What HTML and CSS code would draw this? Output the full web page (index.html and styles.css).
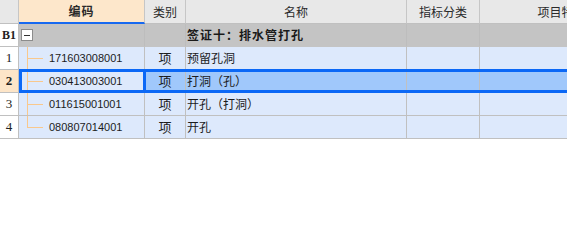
FILE: index.html
```html
<!DOCTYPE html>
<html lang="zh-CN">
<head>
<meta charset="utf-8">
<title>签证十</title>
<link rel="stylesheet" href="styles.css">
</head>
<body>
<div class="sheet">
  <div class="grid">
    <div class="c hd rh"></div>
    <div class="c hd hd-active">编码</div>
    <div class="c hd">类别</div>
    <div class="c hd">名称</div>
    <div class="c hd">指标分类</div>
    <div class="c hd">项目特征</div>

    <div class="c rh rh-b">B1</div>
    <div class="c grp code"><span class="expander"></span></div>
    <div class="c grp"></div>
    <div class="c grp name grp-title">签证十：排水管打孔</div>
    <div class="c grp"></div>
    <div class="c grp"></div>

    <div class="c rh">1</div>
    <div class="c row code tree">171603008001</div>
    <div class="c row mid">项</div>
    <div class="c row name">预留孔洞</div>
    <div class="c row"></div>
    <div class="c row"></div>

    <div class="c rh rh-sel">2</div>
    <div class="c row code tree">030413003001</div>
    <div class="c row sel mid">项</div>
    <div class="c row sel name">打洞（孔）</div>
    <div class="c row sel"></div>
    <div class="c row sel"></div>

    <div class="c rh">3</div>
    <div class="c row code tree">011615001001</div>
    <div class="c row mid">项</div>
    <div class="c row name">开孔（打洞）</div>
    <div class="c row"></div>
    <div class="c row"></div>

    <div class="c rh">4</div>
    <div class="c row code tree tree-last">080807014001</div>
    <div class="c row mid">项</div>
    <div class="c row name">开孔</div>
    <div class="c row"></div>
    <div class="c row"></div>
  </div>
  <div class="sel-row"></div>
  <div class="sel-cell"></div>
</div>
</body>
</html>
```
FILE: styles.css
```css
html, body {
  margin: 0;
  padding: 0;
  background: #ffffff;
  overflow: hidden;
}
body {
  width: 567px;
  height: 242px;
  font-family: "Noto Sans CJK SC", "Liberation Sans", sans-serif;
  font-size: 12px;
  color: #1c1c1c;
}
.sheet {
  position: relative;
  width: 644px;
}
.grid {
  display: grid;
  grid-template-columns: 19px 126px 41px 221px 73px 164px;
  grid-template-rows: 24px 23px 23px 23px 23px 23px;
}
.c {
  box-sizing: border-box;
  border-right: 1px solid #c0c0c0;
  border-bottom: 1px solid #c0c0c0;
  line-height: 22px;
  white-space: nowrap;
  overflow: hidden;
}
.hd {
  background: #e8e8e8;
  text-align: center;
  color: #2a2a2a;
  line-height: 23px;
  border-right-color: #c6c6c6;
}
.hd-active {
  background: #fde7cb;
  font-weight: bold;
  border-bottom: 2px solid #1769f0;
  line-height: 22px;
  letter-spacing: 1px;
}
.rh {
  background: #ffffff;
  text-align: center;
  font-family: "Liberation Serif", serif;
  font-size: 13px;
  color: #222;
}
.hd.rh { background: #e8e8e8; }
.rh-b {
  font-weight: bold;
  font-size: 12px;
}
.rh-sel {
  background: #fde5c8;
  font-weight: bold;
}
.grp {
  background: #c4c4c4;
  border-right-color: #bdbdbd;
  border-bottom-color: #c4c4c4;
}
.grp-title {
  font-weight: bold;
  letter-spacing: 1px;
  color: #1a1a1a;
}
.row {
  background: #dde9fc;
}
.row.sel {
  background: #a0c8fb;
}
.mid {
  text-align: center;
  font-size: 13px;
}
.name {
  padding-left: 1px;
}
.code {
  position: relative;
}
.tree {
  padding-left: 30px;
  font-family: "Liberation Sans", sans-serif;
  font-size: 11px;
}
.tree::before {
  content: "";
  position: absolute;
  left: 8px;
  top: 0;
  bottom: -1px;
  width: 1px;
  background: #f9c88c;
}
.tree-last::before {
  bottom: auto;
  height: 11px;
}
.tree::after {
  content: "";
  position: absolute;
  left: 8px;
  top: 11px;
  width: 16px;
  height: 1px;
  background: #f9c88c;
}
.expander {
  position: absolute;
  left: 2px;
  top: 5px;
  width: 12px;
  height: 12px;
  box-sizing: border-box;
  border: 1px solid #8c8c8c;
  background: #ffffff;
}
.expander::after {
  content: "";
  position: absolute;
  left: 2px;
  top: 5px;
  width: 6px;
  height: 1px;
  background: #333;
}
.sel-row {
  position: absolute;
  left: 19px;
  right: 0;
  top: 69px;
  height: 24px;
  box-sizing: border-box;
  border-top: 3px solid #0b68f6;
  border-bottom: 3px solid #0b68f6;
}
.sel-cell {
  position: absolute;
  left: 19px;
  top: 69px;
  width: 127px;
  height: 24px;
  box-sizing: border-box;
  border: 3px solid #0b68f6;
}
```
